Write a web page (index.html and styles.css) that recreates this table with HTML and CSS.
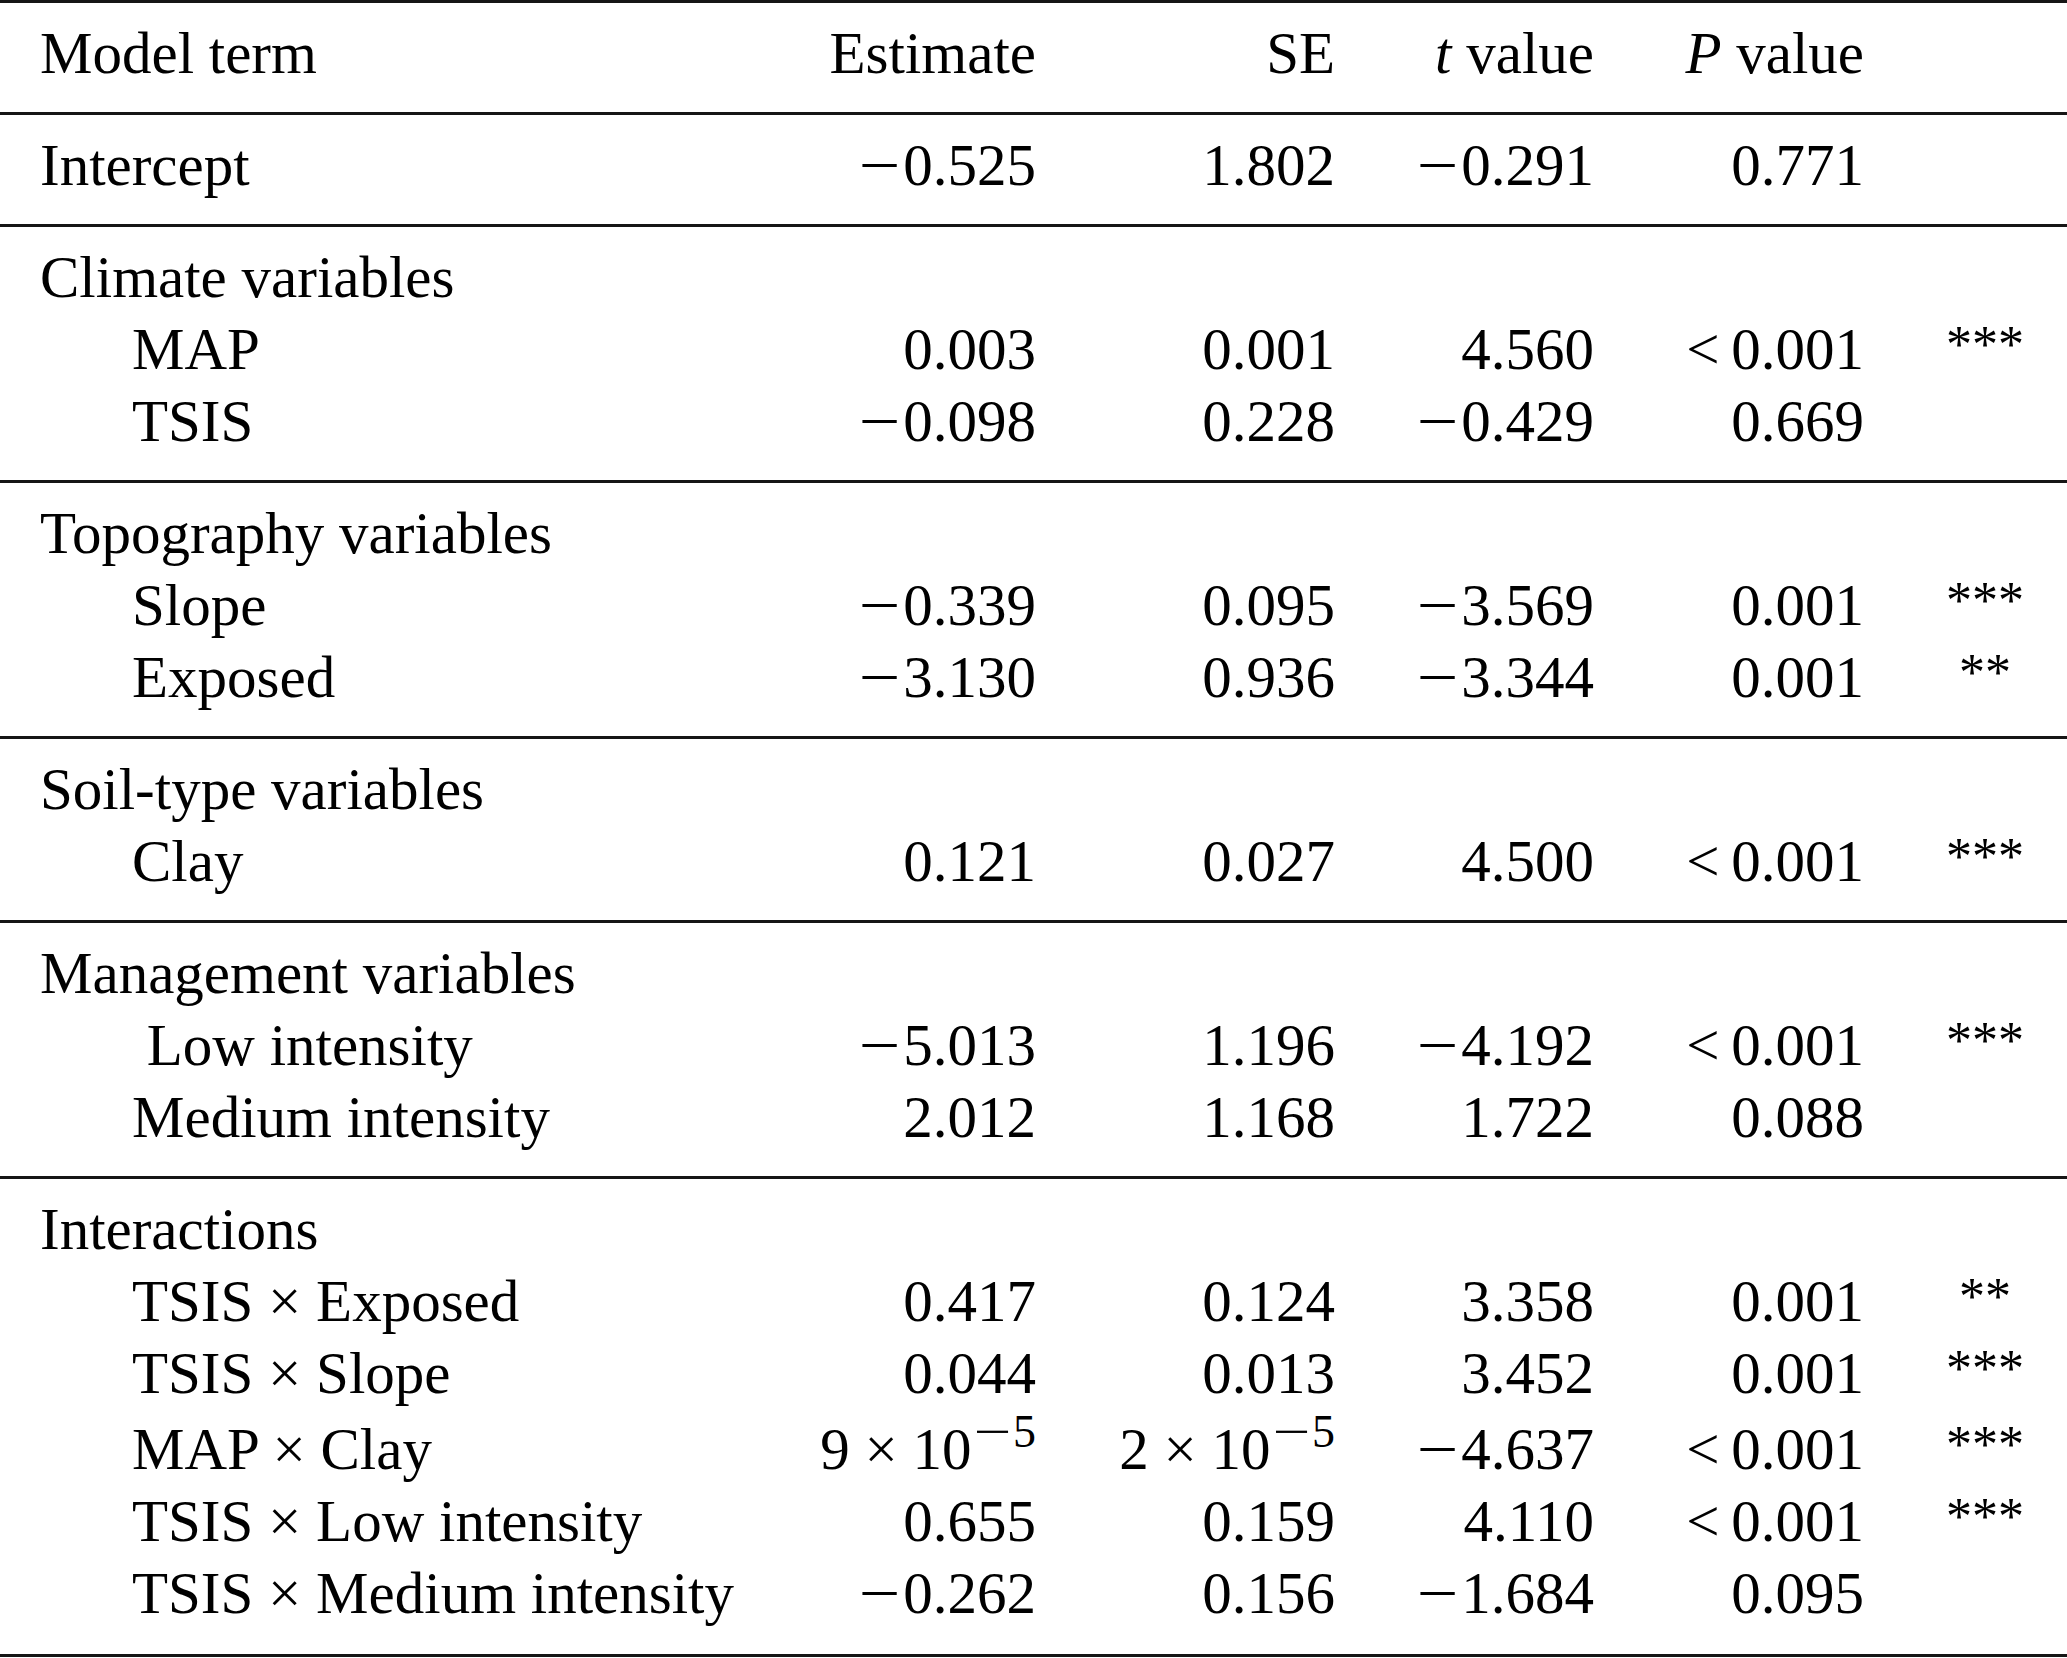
FILE: index.html
```html
<!DOCTYPE html>
<html lang="en">
<head>
<meta charset="utf-8">
<title>Model terms</title>
<link rel="stylesheet" href="styles.css">
</head>
<body>
<div class="table">
  <div class="section">
    <div class="row">
      <div class="label">Model term</div>
      <div class="num">Estimate</div>
      <div class="num">SE</div>
      <div class="num"><i>t</i> value</div>
      <div class="num"><i>P</i> value</div>
      <div class="sig"></div>
    </div>
  </div>

  <div class="section">
    <div class="row">
      <div class="label">Intercept</div>
      <div class="num"><span class="mn">−</span>0.525</div>
      <div class="num">1.802</div>
      <div class="num"><span class="mn">−</span>0.291</div>
      <div class="num">0.771</div>
      <div class="sig"></div>
    </div>
  </div>

  <div class="section">
    <div class="row">
      <div class="label">Climate variables</div>
      <div class="num"></div><div class="num"></div><div class="num"></div><div class="num"></div><div class="sig"></div>
    </div>
    <div class="row">
      <div class="label sub">MAP</div>
      <div class="num">0.003</div>
      <div class="num">0.001</div>
      <div class="num">4.560</div>
      <div class="num">&lt;&thinsp;0.001</div>
      <div class="sig"><span class="stars">***</span></div>
    </div>
    <div class="row">
      <div class="label sub">TSIS</div>
      <div class="num"><span class="mn">−</span>0.098</div>
      <div class="num">0.228</div>
      <div class="num"><span class="mn">−</span>0.429</div>
      <div class="num">0.669</div>
      <div class="sig"></div>
    </div>
  </div>

  <div class="section">
    <div class="row">
      <div class="label">Topography variables</div>
      <div class="num"></div><div class="num"></div><div class="num"></div><div class="num"></div><div class="sig"></div>
    </div>
    <div class="row">
      <div class="label sub">Slope</div>
      <div class="num"><span class="mn">−</span>0.339</div>
      <div class="num">0.095</div>
      <div class="num"><span class="mn">−</span>3.569</div>
      <div class="num">0.001</div>
      <div class="sig"><span class="stars">***</span></div>
    </div>
    <div class="row">
      <div class="label sub">Exposed</div>
      <div class="num"><span class="mn">−</span>3.130</div>
      <div class="num">0.936</div>
      <div class="num"><span class="mn">−</span>3.344</div>
      <div class="num">0.001</div>
      <div class="sig"><span class="stars">**</span></div>
    </div>
  </div>

  <div class="section">
    <div class="row">
      <div class="label">Soil-type variables</div>
      <div class="num"></div><div class="num"></div><div class="num"></div><div class="num"></div><div class="sig"></div>
    </div>
    <div class="row">
      <div class="label sub">Clay</div>
      <div class="num">0.121</div>
      <div class="num">0.027</div>
      <div class="num">4.500</div>
      <div class="num">&lt;&thinsp;0.001</div>
      <div class="sig"><span class="stars">***</span></div>
    </div>
  </div>

  <div class="section">
    <div class="row">
      <div class="label">Management variables</div>
      <div class="num"></div><div class="num"></div><div class="num"></div><div class="num"></div><div class="sig"></div>
    </div>
    <div class="row">
      <div class="label sub">&nbsp;Low intensity</div>
      <div class="num"><span class="mn">−</span>5.013</div>
      <div class="num">1.196</div>
      <div class="num"><span class="mn">−</span>4.192</div>
      <div class="num">&lt;&thinsp;0.001</div>
      <div class="sig"><span class="stars">***</span></div>
    </div>
    <div class="row">
      <div class="label sub">Medium intensity</div>
      <div class="num">2.012</div>
      <div class="num">1.168</div>
      <div class="num">1.722</div>
      <div class="num">0.088</div>
      <div class="sig"></div>
    </div>
  </div>

  <div class="section last">
    <div class="row">
      <div class="label">Interactions</div>
      <div class="num"></div><div class="num"></div><div class="num"></div><div class="num"></div><div class="sig"></div>
    </div>
    <div class="row">
      <div class="label sub">TSIS × Exposed</div>
      <div class="num">0.417</div>
      <div class="num">0.124</div>
      <div class="num">3.358</div>
      <div class="num">0.001</div>
      <div class="sig"><span class="stars">**</span></div>
    </div>
    <div class="row">
      <div class="label sub">TSIS × Slope</div>
      <div class="num">0.044</div>
      <div class="num">0.013</div>
      <div class="num">3.452</div>
      <div class="num">0.001</div>
      <div class="sig"><span class="stars">***</span></div>
    </div>
    <div class="row row-sup">
      <div class="label sub">MAP × Clay</div>
      <div class="num">9 × 10<sup class="sup"><span class="mn mn-sup">−</span>5</sup></div>
      <div class="num">2 × 10<sup class="sup"><span class="mn mn-sup">−</span>5</sup></div>
      <div class="num"><span class="mn">−</span>4.637</div>
      <div class="num">&lt;&thinsp;0.001</div>
      <div class="sig"><span class="stars">***</span></div>
    </div>
    <div class="row">
      <div class="label sub">TSIS × Low intensity</div>
      <div class="num">0.655</div>
      <div class="num">0.159</div>
      <div class="num">4.110</div>
      <div class="num">&lt;&thinsp;0.001</div>
      <div class="sig"><span class="stars">***</span></div>
    </div>
    <div class="row">
      <div class="label sub">TSIS × Medium intensity</div>
      <div class="num"><span class="mn">−</span>0.262</div>
      <div class="num">0.156</div>
      <div class="num"><span class="mn">−</span>1.684</div>
      <div class="num">0.095</div>
      <div class="sig"></div>
    </div>
  </div>
</div>
</body>
</html>
```

FILE: styles.css
```css
html, body {
  margin: 0;
  padding: 0;
  background: #ffffff;
}

body {
  font-family: "Liberation Serif", "Times New Roman", serif;
  color: #000000;
}

.table {
  width: 2067px;
}

.section {
  border-top: 3px solid #161616;
  padding: 14px 0 23px;
}

.section.last {
  padding-bottom: 25px;
  border-bottom: 3px solid #161616;
}

.row {
  display: grid;
  grid-template-columns: 700px 296px 299px 259px 270px 203px;
  padding-left: 40px;
  font-size: 59px;
  line-height: 72px;
  white-space: nowrap;
}

.row-sup {
  padding-top: 4px;
}

.label.sub {
  padding-left: 92px;
}

.num {
  text-align: right;
}

.sig {
  text-align: center;
  padding-left: 39px;
}

.mn {
  display: inline-block;
  width: 0.8em;
  text-align: center;
  transform: scaleX(1.25);
}

.mn.mn-sup {
  width: 0.9em;
  transform: scaleX(1.45);
}

.sup {
  font-size: 0.78em;
  line-height: 0;
  vertical-align: 22px;
}

.stars {
  font-size: 52px;
  line-height: 1;
  vertical-align: 7px;
}
```
